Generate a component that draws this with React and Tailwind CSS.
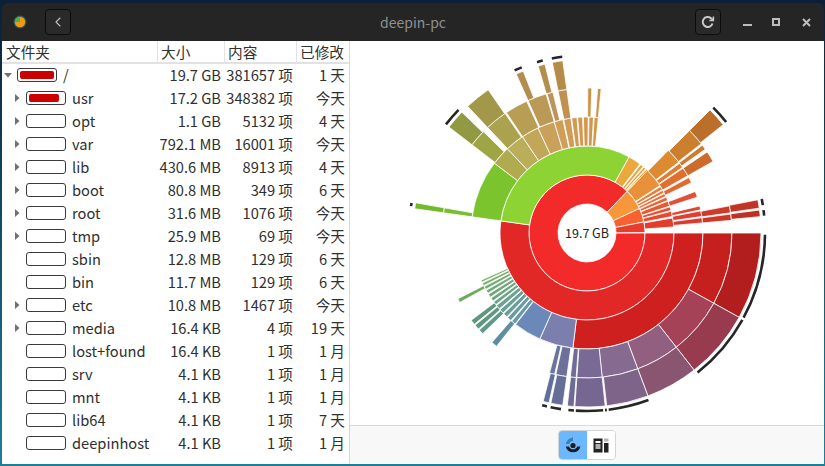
import React from "react";
import { ChevronLeft } from "lucide-react";

const cx = 237;
const cy = 192;
const R = [29, 58, 87, 116, 145, 174];

const point = (r, a) => {
  const t = (a * Math.PI) / 180;
  return `${(cx + r * Math.cos(t)).toFixed(2)} ${(cy + r * Math.sin(t)).toFixed(2)}`;
};

const slicePath = (r0, r1, a0, a1) => {
  const large = a1 - a0 > 180 ? 1 : 0;
  return `M${point(r0, a0)} A${r0} ${r0} 0 ${large} 1 ${point(r0, a1)} L${point(r1, a1)} A${r1} ${r1} 0 ${large} 0 ${point(r1, a0)} Z`;
};

const arcPath = (r, a0, a1) =>
  `M${point(r, a0)} A${r} ${r} 0 ${a1 - a0 > 180 ? 1 : 0} 1 ${point(r, a1)}`;

// ring, start, end, colour. angles clockwise from 3 o'clock
const slices = [
  [1, 0, 314, "#f22a2a"],
  [1, 314, 335, "#f8963a"],
  [1, 335, 349, "#f7622f"],
  [1, 349, 359.5, "#e83c2c"],

  [2, 0, 188, "#e22727"],
  [2, 188, 299, "#8dd334"],
  [2, 299, 307.5, "#eba83c"],
  [2, 308.2, 310.2, "#e9a23a"],
  [2, 310.8, 312.3, "#e9a03a"],
  [2, 312.9, 314, "#e89c3a"],
  [2, 314, 327, "#e8913a"],
  [2, 327.6, 330, "#e77f38"],
  [2, 330.5, 332.5, "#e77636"],
  [2, 333, 335, "#e76e35"],
  [2, 335.6, 338, "#e66434"],
  [2, 338.5, 342, "#e65a33"],
  [2, 342.5, 345, "#e55232"],
  [2, 345.5, 349, "#e44a30"],
  [2, 350, 356, "#e23c2c"],

  [3, 0, 97, "#cf2020"],
  [3, 97, 114, "#7b7fad"],
  [3, 114, 128, "#6a88b8"],
  [3, 128.3, 130.5, "#6a9aa6"],
  [3, 131, 133.2, "#6a9ca2"],
  [3, 133.7, 135.9, "#6a9e9c"],
  [3, 136.4, 138.6, "#6ba096"],
  [3, 139.1, 141.3, "#6ca290"],
  [3, 141.8, 143.6, "#6ea48a"],
  [3, 144.1, 145.9, "#70a684"],
  [3, 146.4, 148.2, "#72a87e"],
  [3, 148.7, 150.4, "#74aa78"],
  [3, 150.9, 152.5, "#76ac72"],
  [3, 153, 154.4, "#78ae6e"],
  [3, 154.9, 156, "#7ab06a"],
  [3, 188, 217, "#7cc42e"],
  [3, 217, 226.6, "#b0ab4f"],
  [3, 226.6, 236.2, "#bbae58"],
  [3, 236.2, 245, "#c2a75a"],
  [3, 245, 253.6, "#c9a15b"],
  [3, 253.6, 258, "#cf9f5a"],
  [3, 258.4, 262, "#d09b56"],
  [3, 262.4, 265, "#d19a52"],
  [3, 265.4, 267.8, "#d19950"],
  [3, 268.2, 270.6, "#d1984e"],
  [3, 271, 273.2, "#d0974c"],
  [3, 273.6, 275.6, "#cf9748"],
  [3, 314.5, 322.3, "#de8a32"],
  [3, 323, 325.5, "#e07e30"],
  [3, 326, 330.4, "#e07030"],
  [3, 331.4, 334.3, "#e06a30"],
  [3, 339, 342, "#e0503a"],
  [3, 346.5, 348.5, "#dd4634"],
  [3, 349, 351.8, "#dc4030"],
  [3, 352.4, 355, "#da3a2e"],

  [4, 0, 29, "#c6201e"],
  [4, 29, 52, "#a64257"],
  [4, 52, 69.5, "#925f80"],
  [4, 69.5, 84, "#876a90"],
  [4, 84, 94, "#786a94"],
  [4, 94.3, 96.6, "#6f6c96"],
  [4, 98, 102.4, "#6d7098"],
  [4, 102.9, 105, "#6a739c"],
  [4, 128.6, 131, "#5f8ea0"],
  [4, 136, 138, "#5f9a88"],
  [4, 138.5, 140.5, "#5f9880"],
  [4, 141, 143, "#5f967c"],
  [4, 151.4, 153, "#6fa85f"],
  [4, 188, 190, "#78bd2f"],
  [4, 217.5, 224.4, "#9ea545"],
  [4, 226.7, 235.6, "#aba24f"],
  [4, 236.2, 245.4, "#b79e54"],
  [4, 246, 253.6, "#bb9a58"],
  [4, 254, 256.4, "#bd9358"],
  [4, 258.5, 262, "#c09050"],
  [4, 270.3, 271.9, "#cb9347"],
  [4, 274.2, 275.6, "#cb9347"],
  [4, 315, 322, "#cd7f30"],
  [4, 322.7, 324.7, "#cf7a32"],
  [4, 326, 330.4, "#cc6b2b"],
  [4, 349.2, 352, "#cd3c2a"],
  [4, 352.5, 355, "#cb3828"],

  [5, 0, 29, "#b21d1d"],
  [5, 29, 52, "#993b4e"],
  [5, 52, 69.5, "#8a5570"],
  [5, 69.5, 83.5, "#7d6488"],
  [5, 84, 94, "#756791"],
  [5, 94.3, 96.5, "#6c6b94"],
  [5, 98, 102, "#646e96"],
  [5, 102.6, 104.6, "#5f7098"],
  [5, 188, 190, "#73b92c"],
  [5, 217.5, 224, "#919a42"],
  [5, 226.7, 235.4, "#a3984a"],
  [5, 246, 248.5, "#b18e4f"],
  [5, 253.7, 256, "#b38d4c"],
  [5, 258.5, 262, "#b48c48"],
  [5, 315, 321.5, "#bb6f2b"],
  [5, 349, 351.8, "#c03526"],
  [5, 352.4, 354.6, "#bd3124"],
];

// black marks for folders that go deeper
const marks = [
  [0.6, 28.4],
  [29.2, 51.6],
  [69.8, 83],
  [83.6, 84.2],
  [84.8, 93.6],
  [94.2, 96],
  [98.4, 101.8],
  [103, 104.6],
  [188.7, 189.7],
  [217.6, 223.8],
  [246, 248.5],
  [253.7, 255.6],
  [258.6, 262],
  [315.2, 321.4],
  [349, 351],
  [352.6, 354.4],
];

const rows = [
  ["/", "19.7 GB", "381657 项", "1 天", "open", 100, 0],
  ["usr", "17.2 GB", "348382 项", "今天", "closed", 87, 1],
  ["opt", "1.1 GB", "5132 项", "4 天", "closed", 0, 1],
  ["var", "792.1 MB", "16001 项", "今天", "closed", 0, 1],
  ["lib", "430.6 MB", "8913 项", "4 天", "closed", 0, 1],
  ["boot", "80.8 MB", "349 项", "6 天", "closed", 0, 1],
  ["root", "31.6 MB", "1076 项", "今天", "closed", 0, 1],
  ["tmp", "25.9 MB", "69 项", "今天", "closed", 0, 1],
  ["sbin", "12.8 MB", "129 项", "6 天", "", 0, 1],
  ["bin", "11.7 MB", "129 项", "6 天", "", 0, 1],
  ["etc", "10.8 MB", "1467 项", "今天", "closed", 0, 1],
  ["media", "16.4 KB", "4 项", "19 天", "closed", 0, 1],
  ["lost+found", "16.4 KB", "1 项", "1 月", "", 0, 1],
  ["srv", "4.1 KB", "1 项", "1 月", "", 0, 1],
  ["mnt", "4.1 KB", "1 项", "1 月", "", 0, 1],
  ["lib64", "4.1 KB", "1 项", "7 天", "", 0, 1],
  ["deepinhost", "4.1 KB", "1 项", "1 月", "", 0, 1],
];

function Expander({ state }) {
  if (state === "open") {
    return (
      <svg width="8" height="8" viewBox="0 0 8 8">
        <path d="M0 2h8L4 6.5z" fill="#707070" />
      </svg>
    );
  }
  if (state === "closed") {
    return (
      <svg width="8" height="8" viewBox="0 0 8 8">
        <path d="M2 0v8l4.5-4z" fill="#707070" />
      </svg>
    );
  }
  return <span className="w-2" />;
}

function UsageBar({ percent }) {
  return (
    <div className="w-10 h-[14px] shrink-0 rounded-[3px] border border-[#3a3a3a] bg-white p-[2px] flex">
      {percent > 0 && (
        <div className="h-full bg-[#cc0000] rounded-[2px]" style={{ width: `${percent}%` }} />
      )}
    </div>
  );
}

function FolderRow({ row }) {
  const [name, size, items, modified, state, percent, depth] = row;
  return (
    <div className="grid grid-cols-[157px_67px_72px_52px] h-[23px] items-center text-[#303030]">
      <div className={depth ? "flex items-center pl-[13px]" : "flex items-center pl-1"}>
        <Expander state={state} />
        <div className="ml-[5px]">
          <UsageBar percent={percent} />
        </div>
        <span className="ml-[6px] whitespace-nowrap">{name}</span>
      </div>
      <span className="text-right pr-[3px] whitespace-nowrap">{size}</span>
      <span className="text-right pr-[3px] whitespace-nowrap">{items}</span>
      <span className="text-right pr-[3px] whitespace-nowrap">{modified}</span>
    </div>
  );
}

function Sunburst() {
  return (
    <svg width="473" height="384" viewBox="0 0 473 384">
      {slices.map(([ring, a0, a1, color], i) => (
        <path
          key={i}
          d={slicePath(R[ring - 1], R[ring], a0, a1)}
          fill={color}
          stroke="#ffffff"
          strokeWidth="0.8"
        />
      ))}
      {marks.map(([a0, a1], i) => (
        <path key={i} d={arcPath(178, a0, a1)} fill="none" stroke="#262626" strokeWidth="2.6" />
      ))}
      <text x={cx} y={cy + 5} textAnchor="middle" fontSize="12.5" fill="#222222">
        19.7 GB
      </text>
    </svg>
  );
}

export default function App() {
  return (
    <div
      className="w-[825px] h-[466px] overflow-hidden bg-gradient-to-b from-[#0b2038] to-[#1c7f98] pl-[2px] pr-px pt-[3px] pb-[2px]"
      style={{ fontFamily: '"Noto Sans CJK SC", "Noto Sans", sans-serif' }}
    >
      <div className="h-full flex flex-col rounded-t-md overflow-hidden">
        {/* title bar */}
        <div className="h-[38px] shrink-0 bg-[#252525] flex items-center relative">
          <svg className="ml-[11px]" width="14" height="14" viewBox="0 0 14 14">
            <circle cx="7" cy="7" r="6.5" fill="#2e5a66" />
            <circle cx="7" cy="7" r="5.2" fill="#f09a14" />
            <path d="M7 7V1.8A5.2 5.2 0 0 0 1.8 7z" fill="#4caf50" />
          </svg>
          <button className="ml-[18px] w-[26px] h-[26px] rounded-[4px] border border-[#0c0c0c] bg-[#2a2a2a] flex items-center justify-center text-[#c0c0c0]">
            <ChevronLeft size={16} strokeWidth={1.6} />
          </button>
          <div className="absolute inset-0 flex items-center justify-center text-[14px] text-[#8f8f8f]">
            deepin-pc
          </div>
          <div className="ml-auto flex items-center relative">
            <button className="w-[26px] h-[26px] rounded-[4px] border border-[#0c0c0c] bg-[#2a2a2a] flex items-center justify-center">
              <svg width="14" height="14" viewBox="0 0 14 14" fill="none" stroke="#c8c8c8" strokeWidth="2">
                <path d="M11.5 8.5A5 5 0 1 1 10 3.2L12 5" />
                <path d="M12.4 1.5v4h-4" strokeWidth="1.5" />
              </svg>
            </button>
            <div className="w-[30px] ml-[11px] flex justify-center">
              <div className="w-[9px] h-[2px] bg-[#bdbdbd] mt-[6px]" />
            </div>
            <div className="w-[30px] -ml-px flex justify-center">
              <div className="w-2 h-2 border-2 border-[#bdbdbd]" />
            </div>
            <div className="w-[30px] mr-[3px] flex justify-center">
              <svg width="9" height="9" viewBox="0 0 9 9" stroke="#bdbdbd" strokeWidth="2">
                <path d="M1 1l7 7M8 1L1 8" />
              </svg>
            </div>
          </div>
        </div>

        <div className="flex-1 flex bg-white min-h-0">
          {/* folder list */}
          <div className="w-[348px] shrink-0 border-r border-[#d8d8d8] text-[14.67px] leading-none">
            <div className="grid grid-cols-[156px_67px_72px_52px] h-[23px] border-b-2 border-[#e2e2e2] items-center text-[#303030]">
              <span className="pl-1 pt-[2px] border-r border-[#e2e2e2] h-full flex items-center">文件夹</span>
              <span className="pl-[3px] pt-[2px] border-r border-[#e2e2e2] h-full flex items-center">大小</span>
              <span className="pl-[3px] pt-[2px] border-r border-[#e2e2e2] h-full flex items-center">内容</span>
              <span className="pl-[3px] pt-[2px] h-full flex items-center whitespace-nowrap">已修改</span>
            </div>
            <div className="-ml-[2px]">
              {rows.map((row) => (
                <FolderRow key={row[0]} row={row} />
              ))}
            </div>
          </div>

          {/* chart */}
          <div className="flex-1 flex flex-col min-w-0">
            <div className="flex-1 min-h-0">
              <Sunburst />
            </div>
            <div className="h-[39px] shrink-0 border-t border-[#d8d8d8] bg-[#f8f8f8] flex items-center justify-center">
              <div className="flex h-[30px] w-[58px] rounded-[4px] border border-[#d4d4d4] overflow-hidden">
                <div className="w-[29px] bg-[#6cb8ff] flex items-center justify-center">
                  <svg width="18" height="18" viewBox="0 0 18 18">
                    <path d="M9 1.5A7.5 7.5 0 0 0 2 8h3.2A4 4 0 0 1 9 5z" fill="#3e7fb5" />
                    <circle cx="9" cy="9.5" r="2.6" fill="#1c1c1c" />
                    <path d="M1.8 10.5A7.5 7.5 0 0 0 16.4 10.5H13.2A4.4 4.4 0 0 1 5 10.5z" fill="#1c1c1c" />
                  </svg>
                </div>
                <div className="w-[29px] bg-white flex items-center justify-center">
                  <svg width="16" height="15" viewBox="0 0 16 15">
                    <rect x="0.5" y="0.5" width="9" height="14" fill="#222222" />
                    <rect x="2.5" y="3" width="5" height="2" fill="#ffffff" />
                    <rect x="2.5" y="6" width="5" height="5" fill="#b0b0b0" />
                    <rect x="11" y="0.5" width="4.5" height="3" fill="#b5b5b5" />
                    <rect x="11" y="5" width="4.5" height="9.5" fill="#222222" />
                  </svg>
                </div>
              </div>
            </div>
          </div>
        </div>
      </div>
    </div>
  );
}
